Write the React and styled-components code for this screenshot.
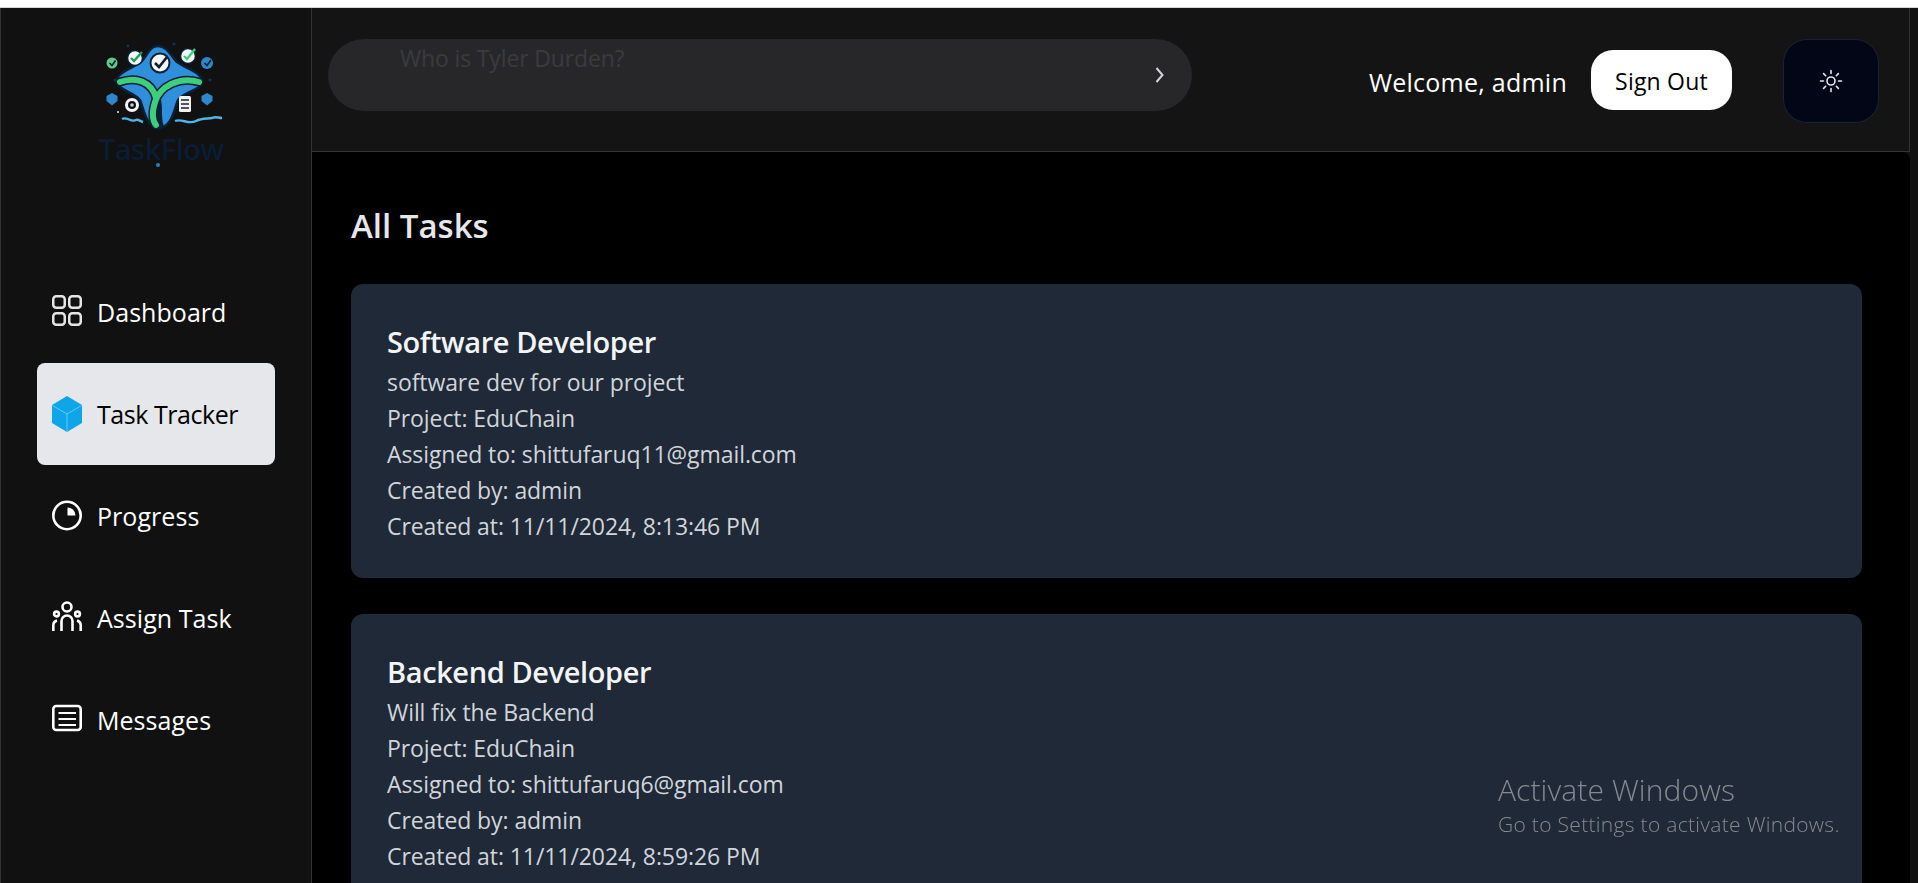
import React from 'react'
import styled, { createGlobalStyle } from 'styled-components'

const GlobalStyle = createGlobalStyle`
    html, body {
        margin: 0;
        height: 883px;
        overflow: hidden;
        background: #111111;
    }
    * {
        box-sizing: border-box;
    }
`

const Page = styled.div`
    height: 883px;
    display: flex;
    flex-direction: column;
    font-family: 'Open Sans', 'Noto Sans', sans-serif;
    background: #ffffff;
`

const Shell = styled.div`
    flex-grow: 1;
    min-height: 0;
    display: flex;
    margin-top: 7px;
    border-top: 1px solid #d4d4d0;
    padding-right: 8px;
    background: #111111;
`

const Sidebar = styled.aside`
    width: 312px;
    flex-shrink: 0;
    padding: 0 36px;
    background: #111111;
    border-left: 1px solid #333333;
    border-right: 1px solid #333333;
`

const LogoBox = styled.div`
    height: 253px;
    padding: 32px 0 0 53px;
`

const LogoImage = styled.svg`
    display: block;
    filter: blur(0.4px);
`

const LogoText = styled.div`
    width: 142px;
    margin-top: 2px;
    text-align: center;
    font-size: 29px;
    line-height: 30px;
    font-weight: 600;
    letter-spacing: -0.5px;
    color: #0b1c33;
    filter: blur(0.4px);
`

const LogoDot = styled.div`
    width: 4px;
    height: 4px;
    margin: -1px 0 0 66px;
    border-radius: 50%;
    background: #2b7fc0;
`

const NavList = styled.nav`
    display: flex;
    flex-direction: column;
`

const NavItem = styled.div`
    height: 102px;
    padding-left: 14px;
    display: flex;
    align-items: center;
    gap: 14px;
    border-radius: 8px;
    font-size: 25px;
    letter-spacing: ${props => (props.$active ? '-0.45px' : '0.05px')};
    color: ${props => (props.$active ? '#000000' : '#ffffff')};
    background: ${props => (props.$active ? '#e5e7eb' : 'transparent')};
`

const NavIcon = styled.svg`
    width: 32px;
    height: 36px;
    flex-shrink: 0;
`

const Content = styled.div`
    flex-grow: 1;
    min-width: 0;
    display: flex;
    flex-direction: column;
    background: #111111;
`

const Header = styled.header`
    height: 144px;
    flex-shrink: 0;
    display: flex;
    align-items: center;
    padding: 0 30px 0 16px;
    background: #141414;
    border-bottom: 1px solid #333333;
    border-right: 1px solid #333333;
`

const SearchBar = styled.div`
    width: 864px;
    height: 72px;
    align-self: flex-start;
    margin-top: 31px;
    position: relative;
    border-radius: 36px;
    background: #27272a;
`

const SearchHint = styled.span`
    position: absolute;
    left: 72px;
    top: 3px;
    font-size: 23px;
    line-height: 32px;
    letter-spacing: -0.15px;
    color: #3b3b3e;
`

const SearchArrow = styled.svg`
    position: absolute;
    right: 23px;
    top: 26px;
    width: 20px;
    height: 20px;
`

const UserArea = styled.div`
    margin-left: auto;
    margin-top: 1px;
    display: flex;
    align-items: center;
`

const Welcome = styled.span`
    padding-top: 4px;
    font-size: 25px;
    letter-spacing: 0.25px;
    color: #ffffff;
`

const SignOut = styled.button`
    width: 141px;
    height: 60px;
    margin-left: 24px;
    padding: 2px 0 0;
    border: none;
    border-radius: 22px;
    background: #ffffff;
    color: #000000;
    font-family: inherit;
    font-size: 23px;
    letter-spacing: 0.2px;
`

const ThemeButton = styled.button`
    width: 96px;
    height: 84px;
    margin: 2px 0 0 51px;
    display: flex;
    align-items: center;
    justify-content: center;
    border: 1px solid #1a2233;
    border-radius: 24px;
    background: #020617;
`

const Main = styled.main`
    flex-grow: 1;
    min-height: 0;
    overflow: hidden;
    padding: 52px 48px 0 39px;
    background: #000000;
    border-top-right-radius: 8px;
`

const Heading = styled.h1`
    margin: 0 0 36px;
    font-size: 33px;
    line-height: 44px;
    font-weight: 600;
    color: #e5e7eb;
`

const TaskCard = styled.article`
    margin-bottom: 36px;
    padding: 35px 36px 32px;
    height: 294px;
    border-radius: 12px;
    background: #1f2937;
`

const TaskTitle = styled.h2`
    margin: 0;
    font-size: 29px;
    line-height: 45px;
    font-weight: 600;
    letter-spacing: -0.4px;
    color: #f3f4f6;
`

const TaskLine = styled.p`
    margin: 0;
    font-size: 23px;
    line-height: 36px;
    letter-spacing: -0.08px;
    color: #d1d5db;
`

const Watermark = styled.div`
    position: fixed;
    left: 1498px;
    top: 771px;
    color: #858a91;
`

const WatermarkTitle = styled.div`
    font-size: 30px;
    line-height: 38px;
    font-weight: 300;
    letter-spacing: 0.1px;
`

const WatermarkText = styled.div`
    padding-top: 1px;
    font-size: 21px;
    line-height: 28px;
    font-weight: 300;
    letter-spacing: 0.3px;
`

const tasks = [
    {
        title: 'Software Developer',
        description: 'software dev for our project',
        project: 'EduChain',
        assignee: 'shittufaruq11@gmail.com',
        creator: 'admin',
        createdAt: '11/11/2024, 8:13:46 PM',
    },
    {
        title: 'Backend Developer',
        description: 'Will fix the Backend',
        project: 'EduChain',
        assignee: 'shittufaruq6@gmail.com',
        creator: 'admin',
        createdAt: '11/11/2024, 8:59:26 PM',
    },
]

function LogoMark() {
    return (
        <LogoImage width="150" height="92" viewBox="0 0 150 92">
            <path d="M68 6 C76 6 80 14 86 21 C94 28 112 32 112 41 C112 50 94 52 88 60 C84 70 82 87 69 88 C56 87 54 70 50 60 C44 52 27 50 27 41 C27 32 44 28 52 21 C58 14 60 6 68 6 Z" fill="#2f8fdc" stroke="#0a2034" strokeWidth="2.5" />
            <path d="M30 42 C46 36 62 42 66 58 C69 68 66 78 69 85" fill="none" stroke="#0a2034" strokeWidth="9" strokeLinecap="round" />
            <path d="M109 42 C90 36 70 46 65 62 C62 72 62 80 66 85" fill="none" stroke="#0a2034" strokeWidth="9" strokeLinecap="round" />
            <path d="M30 42 C46 36 62 42 66 58" fill="none" stroke="#3ecf7a" strokeWidth="6" strokeLinecap="round" />
            <path d="M109 42 C90 36 70 46 65 62 C62 72 62 80 66 85" fill="none" stroke="#3ecf7a" strokeWidth="6" strokeLinecap="round" />
            <circle cx="70" cy="23" r="9.5" fill="#f4f6f8" stroke="#0a2034" strokeWidth="2" />
            <path d="M65 23 L69 27 L77 17" fill="none" stroke="#10202e" strokeWidth="2.6" />
            <circle cx="45" cy="18" r="7.5" fill="#f4f6f8" stroke="#0a2034" strokeWidth="1.5" />
            <path d="M41 18 L44 21 L52 12" fill="none" stroke="#1f9d63" strokeWidth="2.4" />
            <circle cx="98" cy="16" r="7.5" fill="#f4f6f8" stroke="#0a2034" strokeWidth="1.5" />
            <path d="M94 16 L97 19 L105 9" fill="none" stroke="#3ecf7a" strokeWidth="2.4" />
            <circle cx="22" cy="23" r="5.5" fill="#5fc98a" />
            <path d="M19.5 23 L22 25.5 L25.5 20.5" fill="none" stroke="#0a2034" strokeWidth="1.6" />
            <circle cx="117" cy="23" r="6" fill="#2f86c9" />
            <path d="M114.5 23 L117 25.5 L121 20" fill="none" stroke="#0a2034" strokeWidth="1.6" />
            <path d="M22 53 L27.5 56 V61 L22 65.5 L16.5 61 V56 Z" fill="#2f86c9" />
            <path d="M117 53 L122.5 56 V61 L117 65.5 L111.5 61 V56 Z" fill="#2f86c9" />
            <circle cx="42" cy="65" r="7" fill="#f4f6f8" />
            <circle cx="42" cy="65" r="4" fill="#111111" />
            <circle cx="42" cy="65" r="1.8" fill="#c8ccd0" />
            <rect x="89" y="56" width="12" height="16" rx="1.5" fill="#f0f2f4" />
            <path d="M91 60 H99 M91 64 H99 M91 68 H99" stroke="#17222e" strokeWidth="1.4" />
            <path d="M32 79 C37 76 41 83 46 80 C48 79 50 81 53 82" fill="none" stroke="#4eb6ea" strokeWidth="2.4" />
            <path d="M85 81 C92 78 98 85 106 81 C112 78 118 79 122 78 C126 76 128 78 132 78" fill="none" stroke="#4eb6ea" strokeWidth="2.4" />
            <circle cx="28" cy="72" r="1" fill="#e8eef2" />
            <circle cx="38" cy="6" r="1.4" fill="#12324e" />
            <circle cx="84" cy="4" r="1.6" fill="#12324e" />
            <circle cx="25" cy="40" r="1.6" fill="#12324e" />
            <circle cx="120" cy="40" r="1.6" fill="#12324e" />
        </LogoImage>
    )
}

function NavGlyph({ name }) {
    if (name === 'grid') {
        return (
            <NavIcon viewBox="0 0 32 36" fill="none" stroke="#e5e5e5" strokeWidth="2.5">
                <rect x="2.25" y="2.25" width="11.5" height="11.5" rx="3" />
                <rect x="18.25" y="2.25" width="11.5" height="11.5" rx="3" />
                <rect x="2.25" y="19.25" width="11.5" height="11.5" rx="3" />
                <rect x="18.25" y="19.25" width="11.5" height="11.5" rx="3" />
            </NavIcon>
        )
    }
    if (name === 'cube') {
        return (
            <NavIcon viewBox="0 0 32 36">
                <path d="M16 0 L31 9 V27 L16 36 L1 27 V9 Z" fill="#0ea5e9" />
                <path d="M1.5 9.5 L16 18 L30.5 9.5 M16 18 V35.5" fill="none" stroke="#7dd3fc" strokeWidth="0.8" />
            </NavIcon>
        )
    }
    if (name === 'pie') {
        return (
            <NavIcon viewBox="0 0 32 36" fill="none">
                <circle cx="16" cy="17.5" r="13.7" stroke="#ffffff" strokeWidth="2.6" />
                <path d="M16.5 9.5 A8 8 0 0 1 24.5 17.5 H16.5 Z" fill="#ffffff" />
            </NavIcon>
        )
    }
    if (name === 'team') {
        return (
            <NavIcon viewBox="0 0 32 36" fill="none" stroke="#ffffff" strokeWidth="2.6">
                <circle cx="16" cy="7" r="4.5" />
                <circle cx="5.5" cy="14" r="2.4" />
                <circle cx="26.5" cy="14" r="2.4" />
                <path d="M10.5 31 V21 A5.5 5.5 0 0 1 21.5 21 V31" />
                <path d="M2.3 31 V25 A5 5 0 0 1 6 20.5" />
                <path d="M29.7 31 V25 A5 5 0 0 0 26 20.5" />
            </NavIcon>
        )
    }
    return (
        <NavIcon viewBox="0 0 32 36" fill="none" stroke="#ffffff">
            <rect x="2.3" y="4" width="27.4" height="24" rx="3" strokeWidth="2.6" />
            <path d="M7.5 11 H25 M7.5 17 H25 M7.5 23 H25" strokeWidth="2.2" />
        </NavIcon>
    )
}

const navItems = [
    { label: 'Dashboard', icon: 'grid' },
    { label: 'Task Tracker', icon: 'cube', active: true },
    { label: 'Progress', icon: 'pie' },
    { label: 'Assign Task', icon: 'team' },
    { label: 'Messages', icon: 'list' },
]

function App() {
    return (
        <Page>
            <GlobalStyle />
            <Shell>
                <Sidebar>
                    <LogoBox>
                        <LogoMark />
                        <LogoText>TaskFlow</LogoText>
                        <LogoDot />
                    </LogoBox>
                    <NavList>
                        {navItems.map(item => (
                            <NavItem key={item.label} $active={item.active}>
                                <NavGlyph name={item.icon} />
                                {item.label}
                            </NavItem>
                        ))}
                    </NavList>
                </Sidebar>
                <Content>
                    <Header>
                        <SearchBar>
                            <SearchHint>Who is Tyler Durden?</SearchHint>
                            <SearchArrow viewBox="0 0 20 20" fill="none" stroke="#d4d4d8" strokeWidth="2">
                                <path d="M7.5 3 L13.5 10 L7.5 17" />
                            </SearchArrow>
                        </SearchBar>
                        <UserArea>
                            <Welcome>Welcome, admin</Welcome>
                            <SignOut>Sign Out</SignOut>
                            <ThemeButton aria-label="Toggle theme">
                                <svg width="24" height="24" viewBox="0 0 24 24" fill="none" stroke="#e5e7eb" strokeWidth="1.6" strokeLinecap="round">
                                    <circle cx="12" cy="12" r="4" />
                                    <path d="M12 1.5v3M12 19.5v3M1.5 12h3M19.5 12h3M4.6 4.6l2.1 2.1M17.3 17.3l2.1 2.1M4.6 19.4l2.1-2.1M17.3 6.7l2.1-2.1" />
                                </svg>
                            </ThemeButton>
                        </UserArea>
                    </Header>
                    <Main>
                        <Heading>All Tasks</Heading>
                        {tasks.map(task => (
                            <TaskCard key={task.title}>
                                <TaskTitle>{task.title}</TaskTitle>
                                <TaskLine>{task.description}</TaskLine>
                                <TaskLine>Project: {task.project}</TaskLine>
                                <TaskLine>Assigned to: {task.assignee}</TaskLine>
                                <TaskLine>Created by: {task.creator}</TaskLine>
                                <TaskLine>Created at: {task.createdAt}</TaskLine>
                            </TaskCard>
                        ))}
                    </Main>
                </Content>
            </Shell>
            <Watermark>
                <WatermarkTitle>Activate Windows</WatermarkTitle>
                <WatermarkText>Go to Settings to activate Windows.</WatermarkText>
            </Watermark>
        </Page>
    )
}

export default App
